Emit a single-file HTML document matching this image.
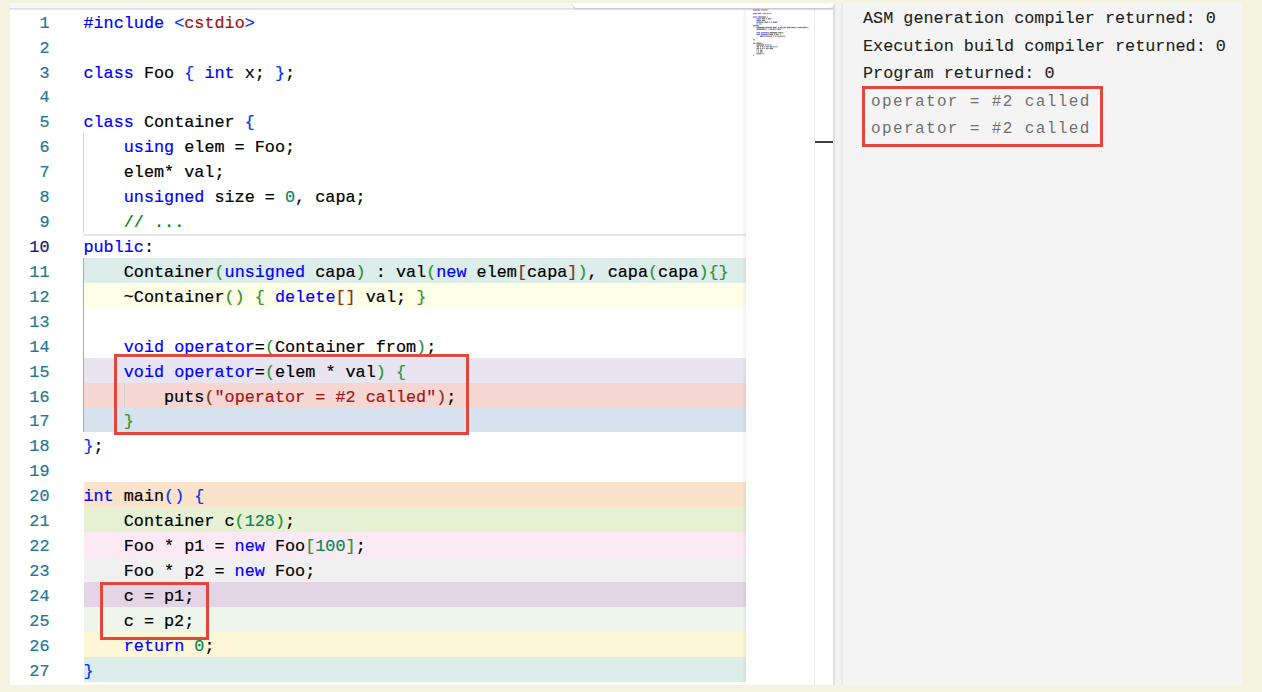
<!DOCTYPE html>
<html><head><meta charset="utf-8"><style>
html,body{margin:0;padding:0;}
body{width:1262px;height:692px;overflow:hidden;background:#f3f3df;position:relative;font-family:"Liberation Mono",monospace;}
.a{position:absolute;}
.ln{position:absolute;left:0;width:49.50px;text-align:right;font-size:16.81px;color:#237893;white-space:pre;-webkit-text-stroke:0.2px currentColor;}
.cl{position:absolute;left:84.00px;margin-left:-0.6px;font-size:16.81px;color:#000;white-space:pre;-webkit-text-stroke:0.2px currentColor;}
.k{color:#0000ff}.s{color:#a31515}.n{color:#098658}.c{color:#008000}.b1{color:#0431fa}.b2{color:#319331}.b3{color:#7b3814}
</style></head><body>

<div class="a" style="left:9.5px;top:3px;width:825.5px;height:681.8px;background:#fff;"></div>
<div class="a" style="left:84.00px;top:258.00px;width:661.50px;height:24.92px;background:#dcedea;"></div>
<div class="a" style="left:84.00px;top:282.92px;width:661.50px;height:24.92px;background:#fefde6;"></div>
<div class="a" style="left:84.00px;top:357.68px;width:661.50px;height:24.92px;background:#e8e5f0;"></div>
<div class="a" style="left:84.00px;top:382.60px;width:661.50px;height:24.92px;background:#f6d6d3;"></div>
<div class="a" style="left:84.00px;top:407.52px;width:661.50px;height:24.92px;background:#d6e2ee;"></div>
<div class="a" style="left:84.00px;top:482.28px;width:661.50px;height:24.92px;background:#fbe3cb;"></div>
<div class="a" style="left:84.00px;top:507.20px;width:661.50px;height:24.92px;background:#e6f1d3;"></div>
<div class="a" style="left:84.00px;top:532.12px;width:661.50px;height:24.92px;background:#fbeaf3;"></div>
<div class="a" style="left:84.00px;top:557.04px;width:661.50px;height:24.92px;background:#f0f0f0;"></div>
<div class="a" style="left:84.00px;top:581.96px;width:661.50px;height:24.92px;background:#e4d5e6;"></div>
<div class="a" style="left:84.00px;top:606.88px;width:661.50px;height:24.92px;background:#eef5ea;"></div>
<div class="a" style="left:84.00px;top:631.80px;width:661.50px;height:24.92px;background:#fdf7d5;"></div>
<div class="a" style="left:84.00px;top:656.72px;width:661.50px;height:24.92px;background:#ddeeea;"></div>
<div class="a" style="left:83.20px;top:133.40px;width:1px;height:99.68px;background:#d3d3d3;"></div>
<div class="a" style="left:83.20px;top:258.00px;width:1px;height:174.44px;background:#ababab;"></div>
<div class="a" style="left:123.56px;top:382.60px;width:1px;height:24.92px;background:#d3d3d3;"></div>
<div class="ln" style="top:11.70px;line-height:24.92px;">1</div>
<div class="cl" style="top:11.70px;line-height:24.92px;"><span class="k">#include</span> <span class="b1">&lt;</span><span class="s">cstdio</span><span class="b1">&gt;</span></div>
<div class="ln" style="top:36.62px;line-height:24.92px;">2</div>
<div class="cl" style="top:36.62px;line-height:24.92px;"></div>
<div class="ln" style="top:61.54px;line-height:24.92px;">3</div>
<div class="cl" style="top:61.54px;line-height:24.92px;"><span class="k">class</span> Foo <span class="b1">{</span> <span class="k">int</span> x; <span class="b1">}</span>;</div>
<div class="ln" style="top:86.46px;line-height:24.92px;">4</div>
<div class="cl" style="top:86.46px;line-height:24.92px;"></div>
<div class="ln" style="top:111.38px;line-height:24.92px;">5</div>
<div class="cl" style="top:111.38px;line-height:24.92px;"><span class="k">class</span> Container <span class="b1">{</span></div>
<div class="ln" style="top:136.30px;line-height:24.92px;">6</div>
<div class="cl" style="top:136.30px;line-height:24.92px;">    <span class="k">using</span> elem = Foo;</div>
<div class="ln" style="top:161.22px;line-height:24.92px;">7</div>
<div class="cl" style="top:161.22px;line-height:24.92px;">    elem* val;</div>
<div class="ln" style="top:186.14px;line-height:24.92px;">8</div>
<div class="cl" style="top:186.14px;line-height:24.92px;">    <span class="k">unsigned</span> size = <span class="n">0</span>, capa;</div>
<div class="ln" style="top:211.06px;line-height:24.92px;">9</div>
<div class="cl" style="top:211.06px;line-height:24.92px;">    <span class="c">// ...</span></div>
<div class="ln" style="top:235.98px;line-height:24.92px;;color:#0b216f">10</div>
<div class="cl" style="top:235.98px;line-height:24.92px;"><span class="k">public</span>:</div>
<div class="ln" style="top:260.90px;line-height:24.92px;">11</div>
<div class="cl" style="top:260.90px;line-height:24.92px;">    Container<span class="b2">(</span><span class="k">unsigned</span> capa<span class="b2">)</span> : val<span class="b2">(</span><span class="k">new</span> elem<span class="b3">[</span>capa<span class="b3">]</span><span class="b2">)</span>, capa<span class="b2">(</span>capa<span class="b2">)</span><span class="b2">{}</span></div>
<div class="ln" style="top:285.82px;line-height:24.92px;">12</div>
<div class="cl" style="top:285.82px;line-height:24.92px;">    ~Container<span class="b2">()</span> <span class="b2">{</span> <span class="k">delete</span><span class="b3">[]</span> val; <span class="b2">}</span></div>
<div class="ln" style="top:310.74px;line-height:24.92px;">13</div>
<div class="cl" style="top:310.74px;line-height:24.92px;"></div>
<div class="ln" style="top:335.66px;line-height:24.92px;">14</div>
<div class="cl" style="top:335.66px;line-height:24.92px;">    <span class="k">void</span> <span class="k">operator</span>=<span class="b2">(</span>Container from<span class="b2">)</span>;</div>
<div class="ln" style="top:360.58px;line-height:24.92px;">15</div>
<div class="cl" style="top:360.58px;line-height:24.92px;">    <span class="k">void</span> <span class="k">operator</span>=<span class="b2">(</span>elem * val<span class="b2">)</span> <span class="b2">{</span></div>
<div class="ln" style="top:385.50px;line-height:24.92px;">16</div>
<div class="cl" style="top:385.50px;line-height:24.92px;">        puts<span class="b3">(</span><span class="s">"operator = #2 called"</span><span class="b3">)</span>;</div>
<div class="ln" style="top:410.42px;line-height:24.92px;">17</div>
<div class="cl" style="top:410.42px;line-height:24.92px;">    <span class="b2">}</span></div>
<div class="ln" style="top:435.34px;line-height:24.92px;">18</div>
<div class="cl" style="top:435.34px;line-height:24.92px;"><span class="b1">}</span>;</div>
<div class="ln" style="top:460.26px;line-height:24.92px;">19</div>
<div class="cl" style="top:460.26px;line-height:24.92px;"></div>
<div class="ln" style="top:485.18px;line-height:24.92px;">20</div>
<div class="cl" style="top:485.18px;line-height:24.92px;"><span class="k">int</span> main<span class="b1">()</span> <span class="b1">{</span></div>
<div class="ln" style="top:510.10px;line-height:24.92px;">21</div>
<div class="cl" style="top:510.10px;line-height:24.92px;">    Container c<span class="b2">(</span><span class="n">128</span><span class="b2">)</span>;</div>
<div class="ln" style="top:535.02px;line-height:24.92px;">22</div>
<div class="cl" style="top:535.02px;line-height:24.92px;">    Foo * p1 = <span class="k">new</span> Foo<span class="b2">[</span><span class="n">100</span><span class="b2">]</span>;</div>
<div class="ln" style="top:559.94px;line-height:24.92px;">23</div>
<div class="cl" style="top:559.94px;line-height:24.92px;">    Foo * p2 = <span class="k">new</span> Foo;</div>
<div class="ln" style="top:584.86px;line-height:24.92px;">24</div>
<div class="cl" style="top:584.86px;line-height:24.92px;">    c = p1;</div>
<div class="ln" style="top:609.78px;line-height:24.92px;">25</div>
<div class="cl" style="top:609.78px;line-height:24.92px;">    c = p2;</div>
<div class="ln" style="top:634.70px;line-height:24.92px;">26</div>
<div class="cl" style="top:634.70px;line-height:24.92px;">    <span class="k">return</span> <span class="n">0</span>;</div>
<div class="ln" style="top:659.62px;line-height:24.92px;">27</div>
<div class="cl" style="top:659.62px;line-height:24.92px;"><span class="b1">}</span></div>
<div class="a" style="left:83px;top:233.6px;width:662.5px;height:2.8px;background:linear-gradient(#e2e2e2,#ededed);"></div>
<div class="a" style="left:9.5px;top:3px;width:825.5px;height:5px;background:#f6f7f9;"></div>
<div class="a" style="left:9.5px;top:8px;width:825.5px;height:1.8px;background:linear-gradient(#dcdcdc,#ebebeb);"></div>
<div class="a" style="left:742px;top:10px;width:3.5px;height:674.8px;background:linear-gradient(90deg,rgba(0,0,0,0),rgba(0,0,0,0.06));"></div>
<svg class="a" style="left:745px;top:0px;opacity:0.52" width="70" height="70"><rect x="8.00" y="9.38" width="6.96" height="1.25" fill="#0000ff"/><rect x="15.83" y="9.38" width="0.87" height="1.25" fill="#0431fa"/><rect x="16.70" y="9.38" width="5.22" height="1.25" fill="#a31515"/><rect x="21.92" y="9.38" width="0.87" height="1.25" fill="#0431fa"/><rect x="8.00" y="12.88" width="4.35" height="1.25" fill="#0000ff"/><rect x="13.22" y="12.88" width="2.61" height="1.25" fill="#000000"/><rect x="16.70" y="12.88" width="0.87" height="1.25" fill="#0431fa"/><rect x="18.44" y="12.88" width="2.61" height="1.25" fill="#0000ff"/><rect x="21.92" y="12.88" width="1.74" height="1.25" fill="#000000"/><rect x="24.53" y="12.88" width="0.87" height="1.25" fill="#0431fa"/><rect x="25.40" y="12.88" width="0.87" height="1.25" fill="#000000"/><rect x="8.00" y="16.38" width="4.35" height="1.25" fill="#0000ff"/><rect x="13.22" y="16.38" width="7.83" height="1.25" fill="#000000"/><rect x="21.92" y="16.38" width="0.87" height="1.25" fill="#0431fa"/><rect x="11.48" y="18.12" width="4.35" height="1.25" fill="#0000ff"/><rect x="16.70" y="18.12" width="3.48" height="1.25" fill="#000000"/><rect x="21.05" y="18.12" width="0.87" height="1.25" fill="#000000"/><rect x="22.79" y="18.12" width="3.48" height="1.25" fill="#000000"/><rect x="11.48" y="19.88" width="4.35" height="1.25" fill="#000000"/><rect x="16.70" y="19.88" width="3.48" height="1.25" fill="#000000"/><rect x="11.48" y="21.62" width="6.96" height="1.25" fill="#0000ff"/><rect x="19.31" y="21.62" width="3.48" height="1.25" fill="#000000"/><rect x="23.66" y="21.62" width="0.87" height="1.25" fill="#000000"/><rect x="25.40" y="21.62" width="0.87" height="1.25" fill="#098658"/><rect x="26.27" y="21.62" width="0.87" height="1.25" fill="#000000"/><rect x="28.01" y="21.62" width="4.35" height="1.25" fill="#000000"/><rect x="11.48" y="23.38" width="1.74" height="1.25" fill="#008000"/><rect x="14.09" y="23.38" width="2.61" height="1.25" fill="#008000"/><rect x="8.00" y="25.12" width="5.22" height="1.25" fill="#0000ff"/><rect x="13.22" y="25.12" width="0.87" height="1.25" fill="#000000"/><rect x="11.48" y="26.88" width="7.83" height="1.25" fill="#000000"/><rect x="19.31" y="26.88" width="0.87" height="1.25" fill="#319331"/><rect x="20.18" y="26.88" width="6.96" height="1.25" fill="#0000ff"/><rect x="28.01" y="26.88" width="3.48" height="1.25" fill="#000000"/><rect x="31.49" y="26.88" width="0.87" height="1.25" fill="#319331"/><rect x="33.23" y="26.88" width="0.87" height="1.25" fill="#000000"/><rect x="34.97" y="26.88" width="2.61" height="1.25" fill="#000000"/><rect x="37.58" y="26.88" width="0.87" height="1.25" fill="#319331"/><rect x="38.45" y="26.88" width="2.61" height="1.25" fill="#0000ff"/><rect x="41.93" y="26.88" width="3.48" height="1.25" fill="#000000"/><rect x="45.41" y="26.88" width="0.87" height="1.25" fill="#7b3814"/><rect x="46.28" y="26.88" width="3.48" height="1.25" fill="#000000"/><rect x="49.76" y="26.88" width="0.87" height="1.25" fill="#7b3814"/><rect x="50.63" y="26.88" width="0.87" height="1.25" fill="#319331"/><rect x="51.50" y="26.88" width="0.87" height="1.25" fill="#000000"/><rect x="53.24" y="26.88" width="3.48" height="1.25" fill="#000000"/><rect x="56.72" y="26.88" width="0.87" height="1.25" fill="#319331"/><rect x="57.59" y="26.88" width="3.48" height="1.25" fill="#000000"/><rect x="61.07" y="26.88" width="0.87" height="1.25" fill="#319331"/><rect x="61.94" y="26.88" width="1.74" height="1.25" fill="#319331"/><rect x="11.48" y="28.62" width="8.70" height="1.25" fill="#000000"/><rect x="20.18" y="28.62" width="1.74" height="1.25" fill="#319331"/><rect x="22.79" y="28.62" width="0.87" height="1.25" fill="#319331"/><rect x="24.53" y="28.62" width="5.22" height="1.25" fill="#0000ff"/><rect x="29.75" y="28.62" width="1.74" height="1.25" fill="#7b3814"/><rect x="32.36" y="28.62" width="3.48" height="1.25" fill="#000000"/><rect x="36.71" y="28.62" width="0.87" height="1.25" fill="#319331"/><rect x="11.48" y="32.12" width="3.48" height="1.25" fill="#0000ff"/><rect x="15.83" y="32.12" width="6.96" height="1.25" fill="#0000ff"/><rect x="22.79" y="32.12" width="0.87" height="1.25" fill="#000000"/><rect x="23.66" y="32.12" width="0.87" height="1.25" fill="#319331"/><rect x="24.53" y="32.12" width="7.83" height="1.25" fill="#000000"/><rect x="33.23" y="32.12" width="3.48" height="1.25" fill="#000000"/><rect x="36.71" y="32.12" width="0.87" height="1.25" fill="#319331"/><rect x="37.58" y="32.12" width="0.87" height="1.25" fill="#000000"/><rect x="11.48" y="33.88" width="3.48" height="1.25" fill="#0000ff"/><rect x="15.83" y="33.88" width="6.96" height="1.25" fill="#0000ff"/><rect x="22.79" y="33.88" width="0.87" height="1.25" fill="#000000"/><rect x="23.66" y="33.88" width="0.87" height="1.25" fill="#319331"/><rect x="24.53" y="33.88" width="3.48" height="1.25" fill="#000000"/><rect x="28.88" y="33.88" width="0.87" height="1.25" fill="#000000"/><rect x="30.62" y="33.88" width="2.61" height="1.25" fill="#000000"/><rect x="33.23" y="33.88" width="0.87" height="1.25" fill="#319331"/><rect x="34.97" y="33.88" width="0.87" height="1.25" fill="#319331"/><rect x="14.96" y="35.62" width="3.48" height="1.25" fill="#000000"/><rect x="18.44" y="35.62" width="0.87" height="1.25" fill="#7b3814"/><rect x="19.31" y="35.62" width="7.83" height="1.25" fill="#a31515"/><rect x="28.01" y="35.62" width="0.87" height="1.25" fill="#a31515"/><rect x="29.75" y="35.62" width="1.74" height="1.25" fill="#a31515"/><rect x="32.36" y="35.62" width="6.09" height="1.25" fill="#a31515"/><rect x="38.45" y="35.62" width="0.87" height="1.25" fill="#7b3814"/><rect x="39.32" y="35.62" width="0.87" height="1.25" fill="#000000"/><rect x="11.48" y="37.38" width="0.87" height="1.25" fill="#319331"/><rect x="8.00" y="39.12" width="0.87" height="1.25" fill="#0431fa"/><rect x="8.87" y="39.12" width="0.87" height="1.25" fill="#000000"/><rect x="8.00" y="42.62" width="2.61" height="1.25" fill="#0000ff"/><rect x="11.48" y="42.62" width="3.48" height="1.25" fill="#000000"/><rect x="14.96" y="42.62" width="1.74" height="1.25" fill="#0431fa"/><rect x="17.57" y="42.62" width="0.87" height="1.25" fill="#0431fa"/><rect x="11.48" y="44.38" width="7.83" height="1.25" fill="#000000"/><rect x="20.18" y="44.38" width="0.87" height="1.25" fill="#000000"/><rect x="21.05" y="44.38" width="0.87" height="1.25" fill="#319331"/><rect x="21.92" y="44.38" width="2.61" height="1.25" fill="#098658"/><rect x="24.53" y="44.38" width="0.87" height="1.25" fill="#319331"/><rect x="25.40" y="44.38" width="0.87" height="1.25" fill="#000000"/><rect x="11.48" y="46.12" width="2.61" height="1.25" fill="#000000"/><rect x="14.96" y="46.12" width="0.87" height="1.25" fill="#000000"/><rect x="16.70" y="46.12" width="1.74" height="1.25" fill="#000000"/><rect x="19.31" y="46.12" width="0.87" height="1.25" fill="#000000"/><rect x="21.05" y="46.12" width="2.61" height="1.25" fill="#0000ff"/><rect x="24.53" y="46.12" width="2.61" height="1.25" fill="#000000"/><rect x="27.14" y="46.12" width="0.87" height="1.25" fill="#319331"/><rect x="28.01" y="46.12" width="2.61" height="1.25" fill="#098658"/><rect x="30.62" y="46.12" width="0.87" height="1.25" fill="#319331"/><rect x="31.49" y="46.12" width="0.87" height="1.25" fill="#000000"/><rect x="11.48" y="47.88" width="2.61" height="1.25" fill="#000000"/><rect x="14.96" y="47.88" width="0.87" height="1.25" fill="#000000"/><rect x="16.70" y="47.88" width="1.74" height="1.25" fill="#000000"/><rect x="19.31" y="47.88" width="0.87" height="1.25" fill="#000000"/><rect x="21.05" y="47.88" width="2.61" height="1.25" fill="#0000ff"/><rect x="24.53" y="47.88" width="3.48" height="1.25" fill="#000000"/><rect x="11.48" y="49.62" width="0.87" height="1.25" fill="#000000"/><rect x="13.22" y="49.62" width="0.87" height="1.25" fill="#000000"/><rect x="14.96" y="49.62" width="2.61" height="1.25" fill="#000000"/><rect x="11.48" y="51.38" width="0.87" height="1.25" fill="#000000"/><rect x="13.22" y="51.38" width="0.87" height="1.25" fill="#000000"/><rect x="14.96" y="51.38" width="2.61" height="1.25" fill="#000000"/><rect x="11.48" y="53.12" width="5.22" height="1.25" fill="#0000ff"/><rect x="17.57" y="53.12" width="0.87" height="1.25" fill="#098658"/><rect x="18.44" y="53.12" width="0.87" height="1.25" fill="#000000"/><rect x="8.00" y="54.88" width="0.87" height="1.25" fill="#0431fa"/></svg>
<div class="a" style="left:814.2px;top:10px;width:1px;height:674.8px;background:#ececec;"></div>
<div class="a" style="left:815px;top:140.6px;width:17.6px;height:2.2px;background:#3e3e3e;"></div>
<div class="a" style="left:833.2px;top:3px;width:1.8px;height:681.8px;background:#dedede;"></div>
<div class="a" style="left:835px;top:3px;width:6px;height:681.8px;background:#f2f2f2;"></div>
<div class="a" style="left:841px;top:3px;width:2px;height:681.8px;background:#eaeaea;"></div>
<div class="a" style="left:572.7px;top:3px;width:261.7px;height:5.2px;background:#fff;border-radius:0 0 4px 4px;box-shadow:0 1px 1.5px #c4c4c8;"></div>
<div class="a" style="left:843px;top:3px;width:399.1px;height:681.8px;background:#f4f4f4;"></div>
<div class="a" style="left:863px;top:8.80px;font-size:16.81px;line-height:20px;color:#1e1e1e;white-space:pre;-webkit-text-stroke:0.12px currentColor;">ASM generation compiler returned: 0</div>
<div class="a" style="left:863px;top:36.80px;font-size:16.81px;line-height:20px;color:#1e1e1e;white-space:pre;-webkit-text-stroke:0.12px currentColor;">Execution build compiler returned: 0</div>
<div class="a" style="left:863px;top:63.80px;font-size:16.81px;line-height:20px;color:#1e1e1e;white-space:pre;-webkit-text-stroke:0.12px currentColor;">Program returned: 0</div>
<div class="a" style="left:871px;top:91.80px;font-size:16px;letter-spacing:1.38px;line-height:20px;color:#707070;white-space:pre;">operator = #2 called</div>
<div class="a" style="left:871px;top:118.70px;font-size:16px;letter-spacing:1.38px;line-height:20px;color:#707070;white-space:pre;">operator = #2 called</div>
<div class="a" style="left:114.20px;top:354.40px;width:355.00px;height:80.30px;border:3.00px solid #e4463d;box-sizing:border-box;"></div>
<div class="a" style="left:100.20px;top:582.30px;width:108.50px;height:57.70px;border:3.00px solid #e4463d;box-sizing:border-box;"></div>
<div class="a" style="left:861.60px;top:86.10px;width:241.00px;height:61.00px;border:3.00px solid #e4463d;box-sizing:border-box;"></div>
</body></html>
